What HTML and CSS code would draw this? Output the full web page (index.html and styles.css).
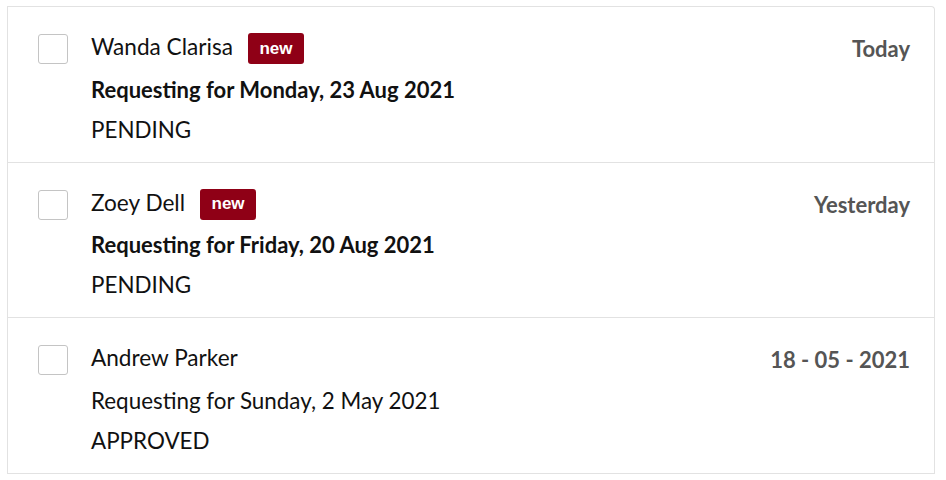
FILE: index.html
```html
<!DOCTYPE html>
<html lang="en">
<head>
    <meta charset="UTF-8">
    <meta name="viewport" content="width=device-width, initial-scale=1.0">
    <title>Requests</title>
    <link rel="stylesheet" href="styles.css">
</head>
<body>
    <div class="request-list">
        <div class="request-row">
            <label class="check"><input type="checkbox"><span class="box"></span></label>
            <div class="request-info">
                <div class="name-line">
                    <span class="name">Wanda Clarisa</span>
                    <span class="badge">new</span>
                </div>
                <div class="detail bold">Requesting for Monday, 23 Aug 2021</div>
                <div class="detail">PENDING</div>
            </div>
            <div class="date">Today</div>
        </div>
        <div class="request-row">
            <label class="check"><input type="checkbox"><span class="box"></span></label>
            <div class="request-info">
                <div class="name-line">
                    <span class="name">Zoey Dell</span>
                    <span class="badge">new</span>
                </div>
                <div class="detail bold">Requesting for Friday, 20 Aug 2021</div>
                <div class="detail">PENDING</div>
            </div>
            <div class="date">Yesterday</div>
        </div>
        <div class="request-row">
            <label class="check"><input type="checkbox"><span class="box"></span></label>
            <div class="request-info">
                <div class="name-line">
                    <span class="name">Andrew Parker</span>
                </div>
                <div class="detail">Requesting for Sunday, 2 May 2021</div>
                <div class="detail">APPROVED</div>
            </div>
            <div class="date">18 - 05 - 2021</div>
        </div>
    </div>
</body>
</html>
```

FILE: styles.css
```css
body {
    margin: 0;
    padding: 6px 11px 0 7px;
    font-family: Lato, "Open Sans", sans-serif;
    color: #111;
    background: #fff;
}
.request-list {
    border: 1px solid #e2e2e2;
    border-bottom: none;
    border-radius: 0 4px 0 0;
}
.request-row {
    display: flex;
    align-items: flex-start;
    padding: 26px 24px 12px 30px;
    border-bottom: 1px solid #e2e2e2;
}
.check {
    margin-top: 1px;
    margin-right: 23px;
    cursor: pointer;
}
.check input {
    display: none;
}
.box {
    display: block;
    width: 28px;
    height: 28px;
    border: 1px solid #c4c4c4;
    border-radius: 3px;
    background: #fff;
}
.request-info {
    flex: 1;
}
.name-line {
    display: flex;
    align-items: center;
    height: 31px;
}
.name {
    font-size: 22.6px;
    margin-top: -4px;
}
.badge {
    margin-left: 15px;
    height: 31px;
    padding: 0 11.5px;
    display: flex;
    align-items: center;
    background: #8f0016;
    color: #fff;
    font-family: "Liberation Sans", Arial, sans-serif;
    font-weight: bold;
    font-size: 17px;
    border-radius: 3px;
}
.detail {
    font-size: 22.4px;
    line-height: 40px;
}
.detail.bold {
    font-size: 22px;
    font-weight: bold;
    margin-top: 5.5px;
}
.detail:not(.bold):nth-child(2) {
    margin-top: 5.5px;
}
.date {
    height: 31px;
    display: flex;
    align-items: center;
    font-size: 22px;
    font-weight: bold;
    color: #555;
}
```
